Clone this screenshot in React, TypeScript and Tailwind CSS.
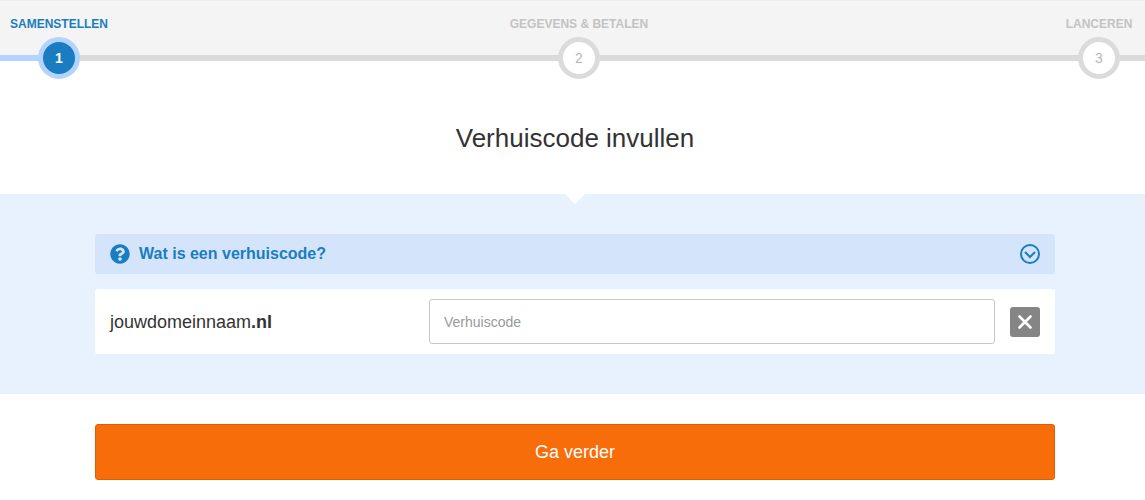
import React, { useState } from 'react';
import { FaQuestionCircle } from 'react-icons/fa';

interface Step {
  label: string;
  active?: boolean;
}

const steps: Step[] = [
  { label: 'SAMENSTELLEN', active: true },
  { label: 'GEGEVENS & BETALEN' },
  { label: 'LANCEREN' },
];

function StepItem({ step, number }: { step: Step; number: number }) {
  return (
    <li
      aria-current={step.active ? 'step' : undefined}
      className="relative w-23 flex flex-col items-center"
    >
      <span
        className={`text-xs font-bold whitespace-nowrap mb-[5px] ${
          step.active ? 'text-[#1a7dc1]' : 'text-[#c3c3c3]'
        }`}
      >
        {step.label}
      </span>
      <span
        className={`w-[42px] h-[42px] rounded-full border-5 flex items-center justify-center text-sm ${
          step.active
            ? 'bg-[#1a7dc1] border-[#b2d4ff] text-white font-bold'
            : 'bg-white border-[#dbdbdb] text-[#b8b8b8]'
        }`}
      >
        {number}
      </span>
    </li>
  );
}

function Stepper() {
  return (
    <nav className="relative bg-[#f4f4f4] border-t border-t-[#eeeeee] border-b-6 border-b-[#dbdbdb]">
      <div className="absolute left-0 -bottom-[6px] w-12 h-[6px] bg-[#b2d4ff]" />
      <ol className="flex justify-between pl-[13px] pt-[15px] -mb-6">
        {steps.map((step, i) => (
          <StepItem key={step.label} step={step} number={i + 1} />
        ))}
      </ol>
    </nav>
  );
}

export default function App() {
  const [code, setCode] = useState('');
  const [open, setOpen] = useState(false);

  return (
    <div className="bg-white text-[#333333] font-['Liberation_Sans',Arial,sans-serif]">
      <Stepper />

      <main>
        <h1 className="text-[26px] leading-8 text-center pl-[5px] pt-[61px] pb-10">
          Verhuiscode invullen
        </h1>

        <section className="relative bg-[#e8f2ff] pl-[5px] py-10">
          <div className="absolute inset-x-0 top-0 pl-[5px] flex justify-center">
            <svg width="20" height="10" viewBox="0 0 20 10" aria-hidden="true">
              <path d="M0 0h20L10 10z" fill="#fff" />
            </svg>
          </div>

          <div className="max-w-[960px] mx-auto flex flex-col gap-[15px]">
            <button
              type="button"
              aria-expanded={open}
              onClick={() => setOpen(!open)}
              className="w-full h-10 px-[15px] flex items-center rounded-[3px] bg-[#d4e4fb] text-[#1a7dc1] font-bold text-base"
            >
              <FaQuestionCircle size={20} />
              <span className="ml-[9px]">Wat is een verhuiscode?</span>
              <svg
                width="20"
                height="20"
                viewBox="0 0 20 20"
                fill="none"
                stroke="currentColor"
                strokeWidth="2"
                className={open ? 'ml-auto rotate-180' : 'ml-auto'}
                aria-hidden="true"
              >
                <circle cx="10" cy="10" r="9" />
                <path d="M5 8l5 5 5-5" />
              </svg>
            </button>

            <div className="flex items-center bg-white rounded-[3px] px-[15px] py-[10px]">
              <label htmlFor="code" className="w-[319px] text-lg">
                jouwdomeinnaam<b>.nl</b>
              </label>
              <input
                type="text"
                id="code"
                value={code}
                onChange={(e) => setCode(e.target.value)}
                placeholder="Verhuiscode"
                className="flex-1 min-w-0 h-[45px] px-[14px] text-sm bg-white border border-[#c8c8c8] rounded-[3px] placeholder-[#999999]"
              />
              <button
                type="button"
                aria-label="Verwijderen"
                onClick={() => setCode('')}
                className="ml-[15px] w-[30px] h-[30px] flex items-center justify-center rounded-[3px] bg-[#858585] text-white"
              >
                <svg
                  width="14"
                  height="14"
                  viewBox="0 0 14 14"
                  fill="none"
                  stroke="currentColor"
                  strokeWidth="2.6"
                  strokeLinecap="round"
                  aria-hidden="true"
                >
                  <path d="M1.5 1.5l11 11M12.5 1.5l-11 11" />
                </svg>
              </button>
            </div>
          </div>
        </section>

        <div className="pl-[5px] pt-[30px] pb-5">
          <div className="max-w-[960px] mx-auto">
            <button
              type="button"
              className="w-full h-14 rounded-[3px] bg-[#f76d0a] border border-[#dd5f00] text-white text-lg"
            >
              Ga verder
            </button>
          </div>
        </div>
      </main>
    </div>
  );
}
